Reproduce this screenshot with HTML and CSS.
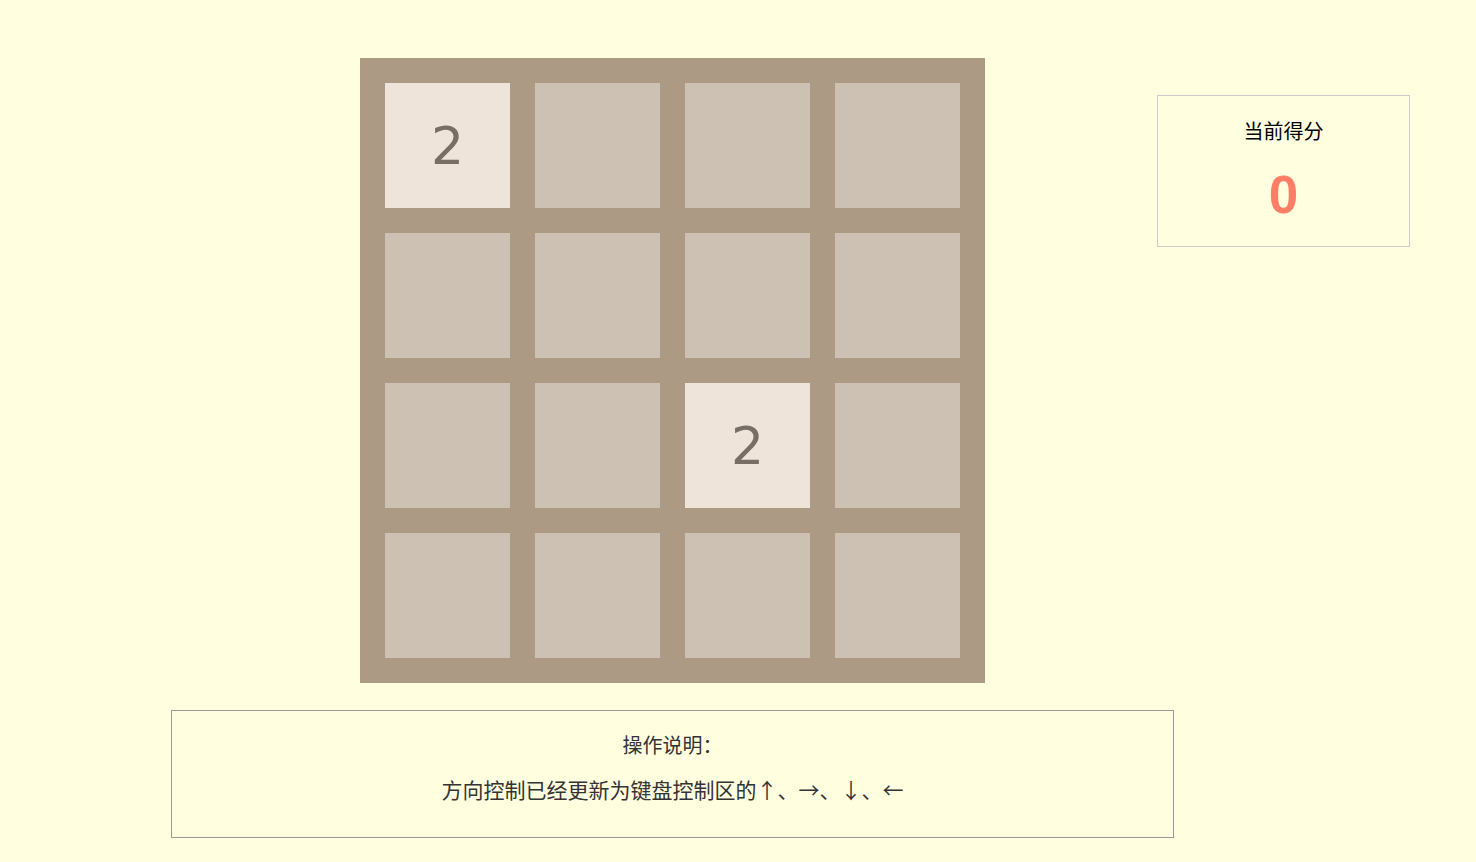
FILE: index.html
```html
<!DOCTYPE html>
<html lang="zh">
<head>
<meta charset="utf-8">
<title>2048</title>
<link rel="stylesheet" href="styles.css">
</head>
<body>
<div class="page">
  <div class="top">
    <div class="board">
      <div class="cell filled">2</div>
      <div class="cell"></div>
      <div class="cell"></div>
      <div class="cell"></div>
      <div class="cell"></div>
      <div class="cell"></div>
      <div class="cell"></div>
      <div class="cell"></div>
      <div class="cell"></div>
      <div class="cell"></div>
      <div class="cell filled">2</div>
      <div class="cell"></div>
      <div class="cell"></div>
      <div class="cell"></div>
      <div class="cell"></div>
      <div class="cell"></div>
    </div>
    <div class="score">
      <div class="score-title">当前得分</div>
      <div class="score-value">0</div>
    </div>
  </div>
  <div class="help">
    <div class="help-title">操作说明：</div>
    <div class="help-text">方向控制已经更新为键盘控制区的↑、→、↓、←</div>
  </div>
</div>
</body>
</html>
```

FILE: styles.css
```css
html, body {
  margin: 0;
  padding: 0;
  background: #ffffe0;
  font-family: "Noto Sans", "Noto Sans CJK SC", sans-serif;
}
.page {
  padding: 58px 0 0 171px;
}
.top {
  display: flex;
  align-items: flex-start;
}
.board {
  margin-left: 189px;
  width: 625px;
  height: 625px;
  box-sizing: border-box;
  padding: 25px;
  background: #ad9a85;
  display: grid;
  grid-template-columns: repeat(4, 125px);
  grid-template-rows: repeat(4, 125px);
  gap: 25px;
}
.cell {
  background: #cdc1b4;
  display: flex;
  align-items: center;
  justify-content: center;
  font-family: "DejaVu Sans", sans-serif;
  font-size: 52px;
  color: #776e65;
}
.cell.filled {
  background: #eee4da;
}
.score {
  margin-left: 172px;
  margin-top: 37px;
  width: 253px;
  height: 152px;
  box-sizing: border-box;
  border: 1px solid #cccccc;
  text-align: center;
  padding-top: 22px;
}
.score-title {
  font-size: 20px;
  line-height: 26px;
  color: #000;
  font-family: "Noto Sans CJK SC", sans-serif;
}
.score-value {
  margin-top: 21px;
  font-family: "Liberation Sans", sans-serif;
  font-weight: bold;
  font-size: 53px;
  line-height: 60px;
  color: #ff7f66;
}
.help {
  margin-top: 27px;
  width: 1003px;
  height: 128px;
  box-sizing: border-box;
  border: 1px solid #999999;
  text-align: center;
  color: #333;
  font-family: "Noto Sans CJK SC", sans-serif;
  padding-top: 20px;
}
.help-title {
  font-size: 20px;
  line-height: 28px;
}
.help-text {
  margin-top: 15px;
  font-size: 21px;
  line-height: 30px;
}
```
